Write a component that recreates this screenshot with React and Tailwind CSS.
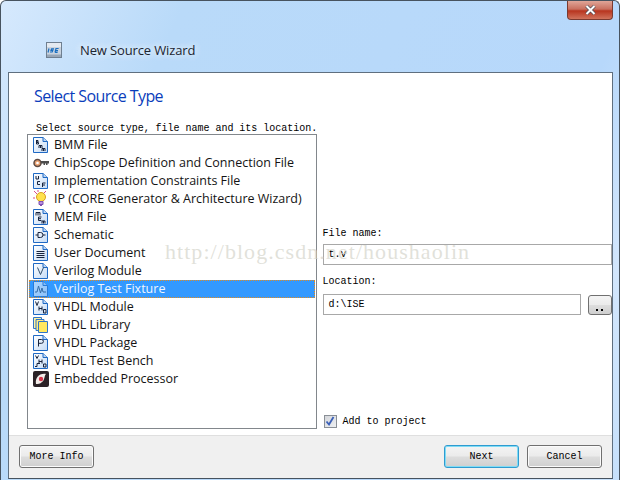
const D = "#17233d";
function Doc({ children }) {
  return (
    <svg width="15" height="16" viewBox="0 0 15 16" className="shrink-0">
      <defs>
        <linearGradient id="docfill" x1="0" y1="0" x2="1" y2="1">
          <stop offset="0" stopColor="#ffffff" />
          <stop offset="1" stopColor="#c4dbf6" />
        </linearGradient>
      </defs>
      <path d="M0.5 0.5H10L14.5 4.5V15.5H0.5Z" fill="url(#docfill)" stroke="#1f69c4" />
      <path d="M10 0.5V4.5H14.5" fill="#bcd6f4" stroke="#1f69c4" />
      <g fill="none" stroke={D} strokeWidth="1">{children}</g>
    </svg>
  );
}
const icons = {
  bmm: <Doc><path d="M3.5 3v4M3.5 3.5h1.5v1.5h-1.5M3.5 5.5h2v1.5h-2M6 8.5v2.5M6 8.5h3v2.5M7.5 8.5v2.5M9 11.5v2.5M9 11.5h3v2.5M10.5 11.5v2.5" /></Doc>,
  chip: (
    <svg width="16" height="12" viewBox="0 0 16 12" className="shrink-0">
      <circle cx="4.5" cy="6" r="3.5" fill="#e8a070" stroke="#5d4a42" strokeWidth="1.5" />
      <circle cx="4.5" cy="6" r="1.3" fill="#fff" />
      <path d="M8 4h8v2.5h-1.5v1.5h-1.5v-1.5h-1v1.5h-1.5v-1.5h-2.5Z" fill="#4d4d4d" />
    </svg>
  ),
  ucf: <Doc><path d="M3 3v3h2.5v-3M7 8.5h-2.5v3h2.5M9.5 14v-4h3M9.5 12h2.5" /></Doc>,
  ip: (
    <svg width="15" height="18" viewBox="0 0 15 18" className="shrink-0">
      <path d="M1 1l3 3M13 1l-3 3M0 8h2M5 0v2" stroke="#d84a8a" strokeWidth="1" />
      <circle cx="8" cy="7" r="4.5" fill="#ffe14d" stroke="#d8a020" />
      <path d="M6 11.5h4v3h-4Z" fill="#b98fe0" stroke="#7d4fb0" />
      <path d="M7 15.5h2" stroke="#7d4fb0" />
    </svg>
  ),
  mem: <Doc><path d="M3 3.5v3M3 3.5h4M5 3.5v3M7 3.5v3M5.5 8h3M5.5 8v3.5h3M5.5 9.7h2.5M9 12v2.5M9 12h3v2.5M10.5 12v2.5" /></Doc>,
  sch: <Doc><path d="M5 5.5v5h2.5a2.5 2.5 0 0 0 0-5ZM2.5 8h2.5M10 8h2.5" /></Doc>,
  user: <Doc><path d="M3.5 6.5h8M3.5 8.5h8M3.5 10.5h8M3.5 12.5h8" /></Doc>,
  v: <Doc><path d="M4.5 4.5l3 7 3-7" stroke="#33506e" /></Doc>,
  tf: <Doc><path d="M2 11h2l1.5-6 2 7 1.5-5 1 4h3" stroke="#33506e" /></Doc>,
  vh: <Doc><path d="M2.5 2.5l1.5 4 1.5-4M6 7.5v4M9 7.5v4M6 9.5h3M10.5 10.5v3.5h2.5v-3.5h-2.5" /></Doc>,
  lib: (
    <svg width="15" height="16" viewBox="0 0 15 16" className="shrink-0">
      <path d="M0.5 0.5h8v11h-8Z" fill="#fff2a0" stroke="#2f75c8" />
      <path d="M3 2.5h8v11h-8Z" fill="#ffec80" stroke="#2f75c8" />
      <path d="M5.5 4.5h9v11h-9Z" fill="#ffe860" stroke="#2f75c8" />
    </svg>
  ),
  pkg: <Doc><path d="M5.5 11.5v-7h3a1.8 1.8 0 0 1 0 3.8h-3" /></Doc>,
  tb: <Doc><path d="M2.5 2.5l1.5 3 1.5-3M6 6.5v4M9 6.5v4M6 8.5h3M10.5 11v3h2.5v-3h-2.5M2 13.5h2v-3h3" /></Doc>,
  emb: (
    <svg width="16" height="16" viewBox="0 0 16 16" className="shrink-0">
      <rect x="0" y="0" width="16" height="16" rx="2" fill="#2b2226" />
      <path d="M3 13C2 7 6 2 13 3C11 5 12 9 9 11C7 13 5 13 3 13Z" fill="#f3ece8" />
      <circle cx="8" cy="8" r="2.2" fill="#d8344a" />
    </svg>
  ),
};
const rows = [
  ["bmm", "BMM File"],
  ["chip", "ChipScope Definition and Connection File"],
  ["ucf", "Implementation Constraints File"],
  ["ip", "IP (CORE Generator & Architecture Wizard)"],
  ["mem", "MEM File"],
  ["sch", "Schematic"],
  ["user", "User Document"],
  ["v", "Verilog Module"],
  ["tf", "Verilog Test Fixture"],
  ["vh", "VHDL Module"],
  ["lib", "VHDL Library"],
  ["pkg", "VHDL Package"],
  ["tb", "VHDL Test Bench"],
  ["emb", "Embedded Processor"],
];
const btn = "h-[23px] rounded-[3px] border bg-[linear-gradient(#f4f4f4,#ebebeb_48%,#dddddd_52%,#cfcfcf)] text-[10px] text-black flex items-center justify-center";

export default function App() {
  return (
    <div className="relative w-[620px] h-[480px] overflow-hidden bg-white font-['Liberation_Mono',monospace]">
      <div className="w-full h-full flex flex-col rounded-t-[6px] border border-[#47535f] border-b-0 px-[7px] bg-[linear-gradient(115deg,#d6e9fd_0%,#b9daf9_22%,#b7d8fb_75%,#d2e6fc_88%,#c6e0fb_100%)]">
        <div className="h-[71px] flex flex-col">
          <div className="flex justify-end">
            <div className="w-[46px] h-[19px] mr-[-1px] rounded-b-[4px] border border-t-0 border-[#7a3a30] bg-[linear-gradient(#e0a598,#c9705f_45%,#b8351f_55%,#d0735c)] flex items-center justify-center">
              <svg width="11" height="10" viewBox="0 0 11 10">
                <path d="M1.5 1l8 8M9.5 1l-8 8" stroke="#4a4a55" strokeWidth="3.4" />
                <path d="M1.5 1l8 8M9.5 1l-8 8" stroke="#ffffff" strokeWidth="2" />
              </svg>
            </div>
          </div>
          <div className="flex items-center pl-[38px] mt-[18px] h-[24px]">
            <svg width="16" height="16" viewBox="0 0 16 16" className="shrink-0">
              <rect x="0.5" y="0.5" width="15" height="15" fill="#c9d3df" stroke="#6f7f90" />
              <rect x="1" y="1" width="14" height="4" fill="#e4eaf1" />
              <path d="M1 12.5h14V15H1Z" fill="#98a6b6" />
              <path d="M2 10.5l1-4M4 10h2.2l.6-1.6H5l.6-1.6H8M9 10.5l1-4h2.6M9.6 8.6h2.4M9 10.4h2.6" fill="none" stroke="#1a6fc0" strokeWidth="1.2" />
            </svg>
            <span className="ml-[18px] text-[13px] leading-[18px] text-[#1c2530] font-['Open_Sans',sans-serif] tracking-[-0.13px] [text-shadow:0_0_7px_#eaf4ff,0_0_7px_#eaf4ff]">New Source Wizard</span>
          </div>
        </div>
        <div className="w-[605px] h-[407px] border border-[#5f6f7f] border-b-[#47535f] bg-white flex flex-col">
          <div className="flex-1 min-h-0 flex flex-col pl-[18px]">
            <div className="pl-[7px] pt-[11px] h-[40px] text-[16px] leading-[24px] text-[#0a3dbb] font-['Open_Sans',sans-serif] tracking-[-0.58px]">Select Source Type</div>
            <div className="pl-[9px] mt-[10px] h-[11px] text-[10px] leading-[11px] text-black tracking-[-0.02px] whitespace-nowrap">Select source type, file name and its location.</div>
            <div className="flex">
              <div className="w-[290px] h-[295px] border border-[#82878c] pt-px pl-px pr-px font-['Open_Sans',sans-serif]">
                {rows.map(([k, label]) => {
                  const sel = k === "tf";
                  return (
                    <div key={k} className={"h-[18px] flex items-center text-[12.5px] whitespace-nowrap " + (sel ? "bg-[#3399ff] text-[#eef6ff] outline-1 outline-dotted outline-offset-[-1px] outline-[#e08a20]" : "text-[#141414]")}>
                      <div className={"w-[25px] pl-[4px] h-full flex items-center justify-start shrink-0 " + (sel ? "opacity-60" : "")}>{icons[k]}</div>
                      <span>{label}</span>
                    </div>
                  );
                })}
              </div>
              <div className="ml-[6px] w-[290px] flex flex-col text-[10px] text-black">
                <div className="mt-[93px] h-[14px] leading-[14px]">File name:</div>
                <div className="mt-[3px] h-[21px] w-[289px] border-[1.5px] border-[#a8a8a8] pl-[5px] flex items-center">t.v</div>
                <div className="mt-[10px] h-[14px] leading-[14px]">Location:</div>
                <div className="mt-[5px] flex items-center">
                  <div className="h-[21px] w-[258px] border-[1.5px] border-[#a8a8a8] pl-[5px] flex items-center">d:\ISE</div>
                  <div className="ml-[7px] w-[24px] h-[20px] rounded-[3px] border border-[#707070] bg-[linear-gradient(#f4f4f4,#ebebeb_48%,#dddddd_52%,#cfcfcf)] flex items-end justify-center gap-[3px] pb-[3px]">
                    <span className="w-[2px] h-[2px] bg-black" />
                    <span className="w-[2px] h-[2px] bg-black" />
                  </div>
                </div>
                <div className="mt-auto mb-[1px] pl-px flex items-center h-[14px]">
                  <div className="w-[13px] h-[13px] border border-[#8a8f96] bg-[linear-gradient(135deg,#d4d6da,#eef0f3)] flex items-center justify-center">
                    <svg width="10" height="10" viewBox="0 0 10 10"><path d="M1.5 5.5l2.5 3L8.5 1" fill="none" stroke="#3a5fb8" strokeWidth="1.8" /></svg>
                  </div>
                  <span className="ml-[6px]">Add to project</span>
                </div>
              </div>
            </div>
          </div>
          <div className="h-[43px] shrink-0 bg-[#f0f0f0] border-t border-[#dfdfdf] flex items-start pt-[9px] pl-[10px] pr-[10px]">
            <div className={btn + " w-[75px] border-[#707070] shadow-[inset_0_0_0_1px_#fbfbfb]"}>More Info</div>
            <div className="flex-1" />
            <div className={btn + " w-[75px] border-[#2f9bd0] shadow-[inset_0_0_0_1px_#7fdcf5]"}>Next</div>
            <div className={btn + " w-[75px] ml-[8px] border-[#707070] shadow-[inset_0_0_0_1px_#fbfbfb]"}>Cancel</div>
          </div>
        </div>
      </div>
      <div className="absolute left-[165px] top-[240px] text-[22px] leading-[24px] text-[#d4d4ca]/70 font-['Liberation_Serif',serif] tracking-[1.05px] pointer-events-none whitespace-nowrap">http://blog.csdn.net/houshaolin</div>
    </div>
  );
}
